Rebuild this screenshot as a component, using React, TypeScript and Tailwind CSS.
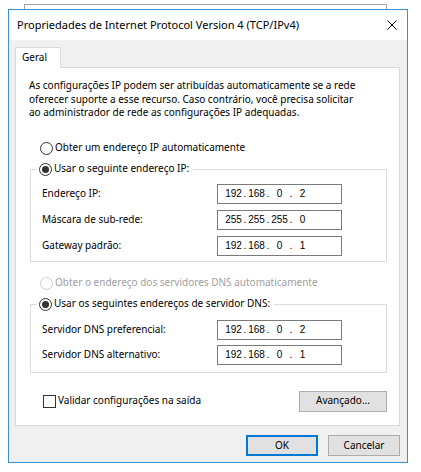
import React from "react";

const ui = "font-['Segoe_UI','Noto_Sans',sans-serif]";

function Radio({ checked, disabled }: { checked?: boolean; disabled?: boolean }) {
  return (
    <span
      className={`w-[13px] h-[13px] rounded-full border bg-white flex items-center justify-center shrink-0 ${
        disabled ? "border-[#cccccc]" : "border-[#333333]"
      }`}
    >
      {checked && <span className="w-[7px] h-[7px] rounded-full bg-[#333333]" />}
    </span>
  );
}

function IpBox({ parts }: { parts: string[] }) {
  return (
    <div className="w-[125px] h-[20px] border border-[#7a7a7a] bg-white flex items-center pl-[7px] font-['Liberation_Sans',Arial,sans-serif] text-[10px] text-black">
      {parts.map((p, i) => (
        <React.Fragment key={i}>
          {i > 0 && <span className="w-[6px] text-center">.</span>}
          <span className="w-[17px] text-center">{p}</span>
        </React.Fragment>
      ))}
    </div>
  );
}

function Field({ label, parts }: { label: string; parts: string[] }) {
  return (
    <div className="flex items-center h-[20px] ml-[11px]">
      <span className="w-[175px]">{label}</span>
      <IpBox parts={parts} />
    </div>
  );
}

function Button({ children, primary, className = "" }: { children: React.ReactNode; primary?: boolean; className?: string }) {
  return (
    <div
      className={`h-[21px] bg-[#e1e1e1] flex items-center justify-center text-black ${
        primary ? "border-2 border-[#0078d7]" : "border border-[#adadad]"
      } ${className}`}
    >
      {children}
    </div>
  );
}

export default function App() {
  return (
    <div className={`relative w-[421px] h-[472px] bg-white text-[10px] leading-[13.5px] text-black ${ui}`}>
      {/* window behind */}
      <div className="absolute left-[24px] top-[4px] w-[363px] h-[12px] border border-[#a5a5a5] bg-white" />

      <div className="absolute left-[8px] top-[9px] w-[400px] h-[454px] border border-[#3b8fd4] bg-[#f0f0f0] flex flex-col">
        {/* title bar */}
        <div className="h-[30px] bg-white flex items-center justify-between pl-[8px] pr-[10px]">
          <span className="text-[11px]">Propriedades de Internet Protocol Version 4 (TCP/IPv4)</span>
          <svg width="10" height="10" viewBox="0 0 10 10" className="mt-[-1px]">
            <path d="M0.5 0.5 L9.5 9.5 M9.5 0.5 L0.5 9.5" stroke="#000" strokeWidth="1" />
          </svg>
        </div>

        <div className="pl-[6px] pr-[7px] pt-[7px]">
          {/* tab */}
          <div className="relative z-10 w-[46px] h-[21px] border border-b-0 border-[#d9d9d9] bg-white pl-[6px] pt-[3px]">
            Geral
          </div>
          <div className="-mt-px h-[359px] border border-[#d9d9d9] bg-white pl-[13px] pt-[11px]">
            <p>
              As configurações IP podem ser atribuídas automaticamente se a rede
              <br />
              oferecer suporte a esse recurso. Caso contrário, você precisa solicitar
              <br />
              ao administrador de rede as configurações IP adequadas.
            </p>

            <div className="mt-[21px] h-[15px] flex items-center gap-[2px] ml-[11px]">
              <Radio />
              <span>Obter um endereço IP automaticamente</span>
            </div>

            <fieldset className="mt-[6px] ml-[1px] w-[357px] border border-[#dcdcdc] pt-[7px] pb-[5px] flex flex-col gap-[6px]">
              <legend className="ml-[6px] pl-[2px] pr-[4px] h-[15px] flex items-center gap-[2px]">
                <Radio checked />
                <span>Usar o seguinte endereço IP:</span>
              </legend>
              <Field label="Endereço IP:" parts={["192", "168", "0", "2"]} />
              <Field label="Máscara de sub-rede:" parts={["255", "255", "255", "0"]} />
              <Field label="Gateway padrão:" parts={["192", "168", "0", "1"]} />
            </fieldset>

            <div className="mt-[14px] h-[15px] flex items-center gap-[2px] ml-[11px] text-[#a0a0a0]">
              <Radio disabled />
              <span>Obter o endereço dos servidores DNS automaticamente</span>
            </div>

            <fieldset className="mt-[6px] ml-[1px] w-[357px] border border-[#dcdcdc] pt-[8px] pb-[7px] flex flex-col gap-[5px]">
              <legend className="ml-[6px] pl-[2px] pr-[4px] h-[15px] flex items-center gap-[2px]">
                <Radio checked />
                <span>Usar os seguintes endereços de servidor DNS:</span>
              </legend>
              <Field label="Servidor DNS preferencial:" parts={["192", "168", "0", "2"]} />
              <Field label="Servidor DNS alternativo:" parts={["192", "168", "0", "1"]} />
            </fieldset>

            <div className="mt-[18px] w-[358px] flex items-center justify-between">
              <div className="flex items-center gap-[2px] ml-[14px]">
                <span className="w-[13px] h-[13px] border border-[#333333] bg-white" />
                <span>Validar configurações na saída</span>
              </div>
              <Button className="w-[88px]">Avançado...</Button>
            </div>
          </div>

          {/* dialog buttons */}
          <div className="mt-[9px] flex justify-end gap-[10px]">
            <Button primary className="w-[72px]">OK</Button>
            <Button className="w-[72px]">Cancelar</Button>
          </div>
        </div>
      </div>
    </div>
  );
}
